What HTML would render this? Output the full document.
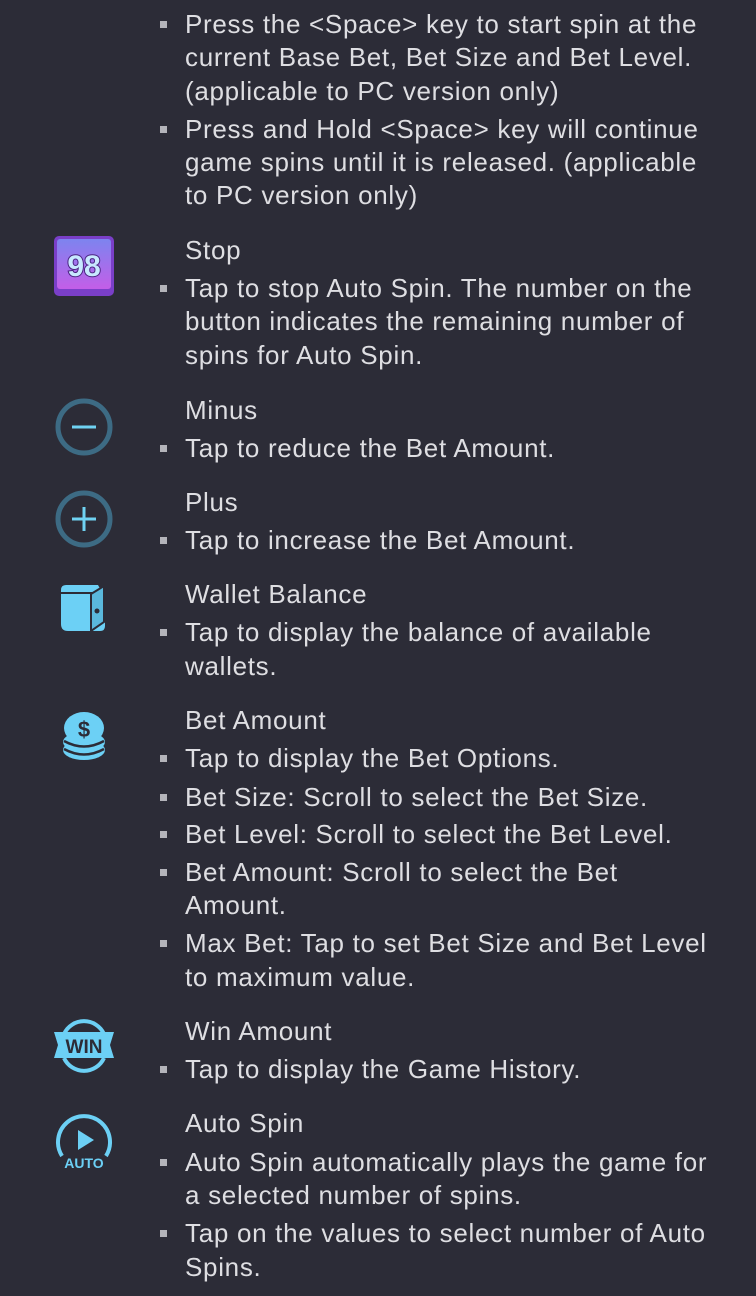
<!DOCTYPE html>
<html><head><meta charset="utf-8"><style>
html,body{margin:0;padding:0;}
body{width:756px;height:1296px;background:#2c2c37;position:relative;overflow:hidden;font-family:"Liberation Sans",sans-serif;color:#dedee2;}
.l{position:absolute;left:185px;font-size:26px;letter-spacing:0.7px;line-height:34px;height:34px;white-space:nowrap;}
.b{position:absolute;left:160px;width:7px;height:7px;background:#b4b4ba;}
svg{position:absolute;}
</style></head><body>
<div class="b" style="top:21px"></div>
<div class="l" style="top:7px">Press the &lt;Space&gt; key to start spin at the</div>
<div class="l" style="top:40px">current Base Bet, Bet Size and Bet Level.</div>
<div class="l" style="top:74px">(applicable to PC version only)</div>
<div class="b" style="top:126px"></div>
<div class="l" style="top:112px">Press and Hold &lt;Space&gt; key will continue</div>
<div class="l" style="top:145px">game spins until it is released. (applicable</div>
<div class="l" style="top:178px">to PC version only)</div>

<svg style="left:53px;top:235px" width="62" height="62" viewBox="0 0 62 62">
<defs><linearGradient id="g1" x1="0" y1="0" x2="0" y2="1"><stop offset="0" stop-color="#7d84ef"/><stop offset="1" stop-color="#c35ee8"/></linearGradient></defs>
<rect x="1" y="1" width="60" height="60" rx="5" fill="#7a3fc8"/>
<rect x="4" y="4" width="54" height="50" rx="3" fill="url(#g1)"/>
<text x="31" y="41" text-anchor="middle" font-family="Liberation Sans" font-weight="bold" font-size="30" fill="#c8e8ff" stroke="#4a2380" stroke-width="2" paint-order="stroke">98</text>
</svg>
<div class="l" style="top:233px">Stop</div>
<div class="b" style="top:285px"></div>
<div class="l" style="top:271px">Tap to stop Auto Spin. The number on the</div>
<div class="l" style="top:304px">button indicates the remaining number of</div>
<div class="l" style="top:338px">spins for Auto Spin.</div>

<svg style="left:53px;top:396px" width="62" height="62" viewBox="0 0 62 62">
<circle cx="31" cy="31" r="26" fill="none" stroke="#3d6b84" stroke-width="5"/>
<line x1="19" y1="31" x2="43" y2="31" stroke="#6fd2f2" stroke-width="3"/>
</svg>
<div class="l" style="top:393px">Minus</div>
<div class="b" style="top:445px"></div>
<div class="l" style="top:431px">Tap to reduce the Bet Amount.</div>

<svg style="left:53px;top:488px" width="62" height="62" viewBox="0 0 62 62">
<circle cx="31" cy="31" r="26" fill="none" stroke="#3d6b84" stroke-width="5"/>
<line x1="19" y1="31" x2="43" y2="31" stroke="#6fd2f2" stroke-width="3"/>
<line x1="31" y1="19" x2="31" y2="43" stroke="#6fd2f2" stroke-width="3"/>
</svg>
<div class="l" style="top:485px">Plus</div>
<div class="b" style="top:537px"></div>
<div class="l" style="top:523px">Tap to increase the Bet Amount.</div>

<svg style="left:58px;top:582px" width="52" height="52" viewBox="0 0 52 52">
<path d="M3 8 Q3 3 8 3 L40 3 L44 10 L3 10Z" fill="#6cd0f5"/>
<path d="M3 12 L40 12 Q47 12 47 18 L47 44 Q47 49 42 49 L10 49 Q3 49 3 42Z" fill="#6cd0f5"/>
<path d="M33 12 L46 4 L46 40 L33 49Z" fill="#5ab8dc" stroke="#2c2c37" stroke-width="2"/>
<circle cx="39" cy="29" r="2.5" fill="#2c2c37"/>
</svg>
<div class="l" style="top:577px">Wallet Balance</div>
<div class="b" style="top:629px"></div>
<div class="l" style="top:615px">Tap to display the balance of available</div>
<div class="l" style="top:649px">wallets.</div>

<svg style="left:60px;top:708px" width="48" height="54" viewBox="0 0 48 54">
<ellipse cx="24" cy="42" rx="21" ry="10" fill="#6cd0f5"/>
<path d="M4 41 Q24 52 44 41" fill="none" stroke="#2c2c37" stroke-width="2.5"/>
<ellipse cx="24" cy="34" rx="21" ry="10" fill="#6cd0f5"/>
<path d="M4 33 Q24 44 44 33" fill="none" stroke="#2c2c37" stroke-width="2.5"/>
<ellipse cx="24" cy="20" rx="20" ry="16" fill="#6cd0f5"/>
<text x="24" y="29" text-anchor="middle" font-family="Liberation Sans" font-weight="bold" font-size="22" fill="#2c2c37">$</text>
</svg>
<div class="l" style="top:703px">Bet Amount</div>
<div class="b" style="top:755px"></div>
<div class="l" style="top:741px">Tap to display the Bet Options.</div>
<div class="b" style="top:794px"></div>
<div class="l" style="top:780px">Bet Size: Scroll to select the Bet Size.</div>
<div class="b" style="top:831px"></div>
<div class="l" style="top:817px">Bet Level: Scroll to select the Bet Level.</div>
<div class="b" style="top:869px"></div>
<div class="l" style="top:855px">Bet Amount: Scroll to select the Bet</div>
<div class="l" style="top:888px">Amount.</div>
<div class="b" style="top:940px"></div>
<div class="l" style="top:926px">Max Bet: Tap to set Bet Size and Bet Level</div>
<div class="l" style="top:960px">to maximum value.</div>

<svg style="left:52px;top:1018px" width="64" height="56" viewBox="0 0 64 56">
<path d="M12 16 A22 22 0 0 1 52 16" fill="none" stroke="#6cd0f5" stroke-width="4"/>
<path d="M12 40 A22 22 0 0 0 52 40" fill="none" stroke="#6cd0f5" stroke-width="4"/>
<path d="M2 14 L62 14 L58 27 L62 40 L2 40 L6 27Z" fill="#6cd0f5"/>
<text x="32" y="35" text-anchor="middle" font-family="Liberation Sans" font-weight="bold" font-size="19" fill="#2c2c37">WIN</text>
</svg>
<div class="l" style="top:1014px">Win Amount</div>
<div class="b" style="top:1066px"></div>
<div class="l" style="top:1052px">Tap to display the Game History.</div>

<svg style="left:52px;top:1110px" width="64" height="62" viewBox="0 0 64 62">
<path d="M10 46 A26 26 0 1 1 54 46" fill="none" stroke="#6cd0f5" stroke-width="4"/>
<path d="M26 20 L42 30 L26 40Z" fill="#6cd0f5"/>
<text x="32" y="58" text-anchor="middle" font-family="Liberation Sans" font-weight="bold" font-size="14" fill="#6cd0f5">AUTO</text>
</svg>
<div class="l" style="top:1106px">Auto Spin</div>
<div class="b" style="top:1159px"></div>
<div class="l" style="top:1145px">Auto Spin automatically plays the game for</div>
<div class="l" style="top:1178px">a selected number of spins.</div>
<div class="b" style="top:1230px"></div>
<div class="l" style="top:1216px">Tap on the values to select number of Auto</div>
<div class="l" style="top:1250px">Spins.</div>
</body></html>
